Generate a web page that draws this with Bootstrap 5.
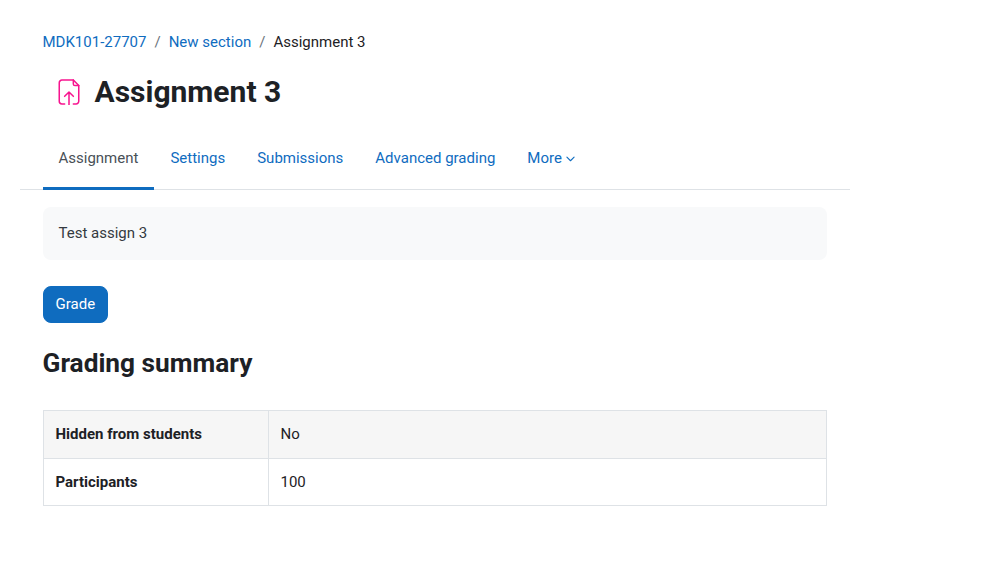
<!DOCTYPE html>
<html lang="en">
<head>
  <meta charset="UTF-8">
  <meta name="viewport" content="width=device-width, initial-scale=1">
  <title>Assignment 3</title>
  <link href="https://cdn.jsdelivr.net/npm/bootstrap@5.3.3/dist/css/bootstrap.min.css" rel="stylesheet">
  <style>
    body { font-family: Roboto, sans-serif; font-size: 15px; line-height: 22.5px; color: #1d2125; background: #fff; }
    a { color: #0f6cbf; text-decoration: none; }
    .page-wrap { width: 850px; padding: 31px 0 0 20px; }
    .page-inner { padding: 0 0 0 22.5px; width: 807px; }
    .crumbs { margin: 0; font-size: 15px; --bs-breadcrumb-divider-color: #6a737b; --bs-breadcrumb-item-padding-x: 8px; }
    .crumbs .breadcrumb-item.active { color: #1d2125; }
    .title-row { margin-top: 13px; height: 51px; }
    .title-icon { width: 26px; height: 26px; margin-left: 13.5px; margin-right: 12.5px; }
    .title-row h1 { font-size: 30px; font-weight: 700; line-height: 36px; margin: 0; color: #1d2125; }
    .tabs-bar { margin-top: 10px; height: 62px; border-bottom: 1px solid #dee2e6; --bs-nav-link-color: #0f6cbf; --bs-nav-link-hover-color: #0f6cbf; }
    .tabs-bar .nav-link { height: 62px; padding: 19px 16px 0; font-size: 15px; }
    .tabs-bar .nav-link.current { color: #495057; border-bottom: 3px solid #0f6cbf; }
    .tab-first { margin-left: 22.5px; }
    .more-caret { width: 9px; height: 9px; margin-left: 4px; }
    .intro-box { margin-top: 17px; height: 53px; padding: 15px 16px; background: #f8f9fa; border-radius: 8px; color: #343a40; }
    .grade-btn { margin-top: 26px; height: 37px; padding: 0 12px; font-size: 15px; line-height: 35px; border-radius: 8px; --bs-btn-bg: #0f6cbf; --bs-btn-border-color: #0f6cbf; --bs-btn-hover-bg: #0c589c; --bs-btn-hover-border-color: #0c589c; }
    .summary-title { margin: 25px 0 0; font-size: 26.25px; font-weight: 700; line-height: 30px; color: #1d2125; }
    .summary-table { margin: 32px 0 0; width: 784px; border-color: #dee2e6; table-layout: fixed; --bs-table-color: #1d2125; }
    .summary-table th, .summary-table td { padding: 12px; line-height: 22.5px; font-size: 15px; }
    .summary-table th { width: 225px; font-weight: 700; }
    .summary-table tr:first-child > * { background: #f6f6f6; height: 48px; }
    .summary-table tr:last-child > * { height: 47px; }
  </style>
</head>
<body>
  <div class="page-wrap">
    <div class="page-inner">
      <nav aria-label="breadcrumb">
        <ol class="breadcrumb crumbs">
          <li class="breadcrumb-item"><a href="#">MDK101-27707</a></li>
          <li class="breadcrumb-item"><a href="#">New section</a></li>
          <li class="breadcrumb-item active" aria-current="page">Assignment 3</li>
        </ol>
      </nav>
      <div class="d-flex align-items-center title-row">
        <svg class="title-icon" viewBox="0 0 24 24" fill="none" stroke="#f7148f" stroke-width="1.4" stroke-linecap="round" stroke-linejoin="round">
          <path d="M8 23H5.5A2.5 2.5 0 0 1 3 20.5V3.5A2.5 2.5 0 0 1 5.5 1H16L21 6V20.5A2.5 2.5 0 0 1 18.5 23H16"/>
          <path d="M16 1V4.500A1.500 1.500 0 0 0 17.500 6H21"/>
          <path d="M12 24V12M8 16L12 12L16 16"/>
        </svg>
        <h1>Assignment 3</h1>
      </div>
    </div>
    <ul class="nav tabs-bar">
      <li class="nav-item tab-first"><a class="nav-link current" href="#">Assignment</a></li>
      <li class="nav-item"><a class="nav-link" href="#">Settings</a></li>
      <li class="nav-item"><a class="nav-link" href="#">Submissions</a></li>
      <li class="nav-item"><a class="nav-link" href="#">Advanced grading</a></li>
      <li class="nav-item"><a class="nav-link" href="#">More<svg class="more-caret" viewBox="0 0 10 10" fill="none" stroke="#0f6cbf" stroke-width="1.2" stroke-linecap="round" stroke-linejoin="round"><path d="M1 3.5L5 7.5L9 3.5"/></svg></a></li>
    </ul>
    <div class="page-inner">
      <div class="intro-box">Test assign 3</div>
      <button type="button" class="btn btn-primary grade-btn d-block">Grade</button>
      <h2 class="summary-title">Grading summary</h2>
      <table class="table table-bordered summary-table">
        <tbody>
          <tr><th scope="row">Hidden from students</th><td>No</td></tr>
          <tr><th scope="row">Participants</th><td>100</td></tr>
        </tbody>
      </table>
    </div>
  </div>
  <script src="https://cdn.jsdelivr.net/npm/bootstrap@5.3.3/dist/js/bootstrap.bundle.min.js"></script>
</body>
</html>
